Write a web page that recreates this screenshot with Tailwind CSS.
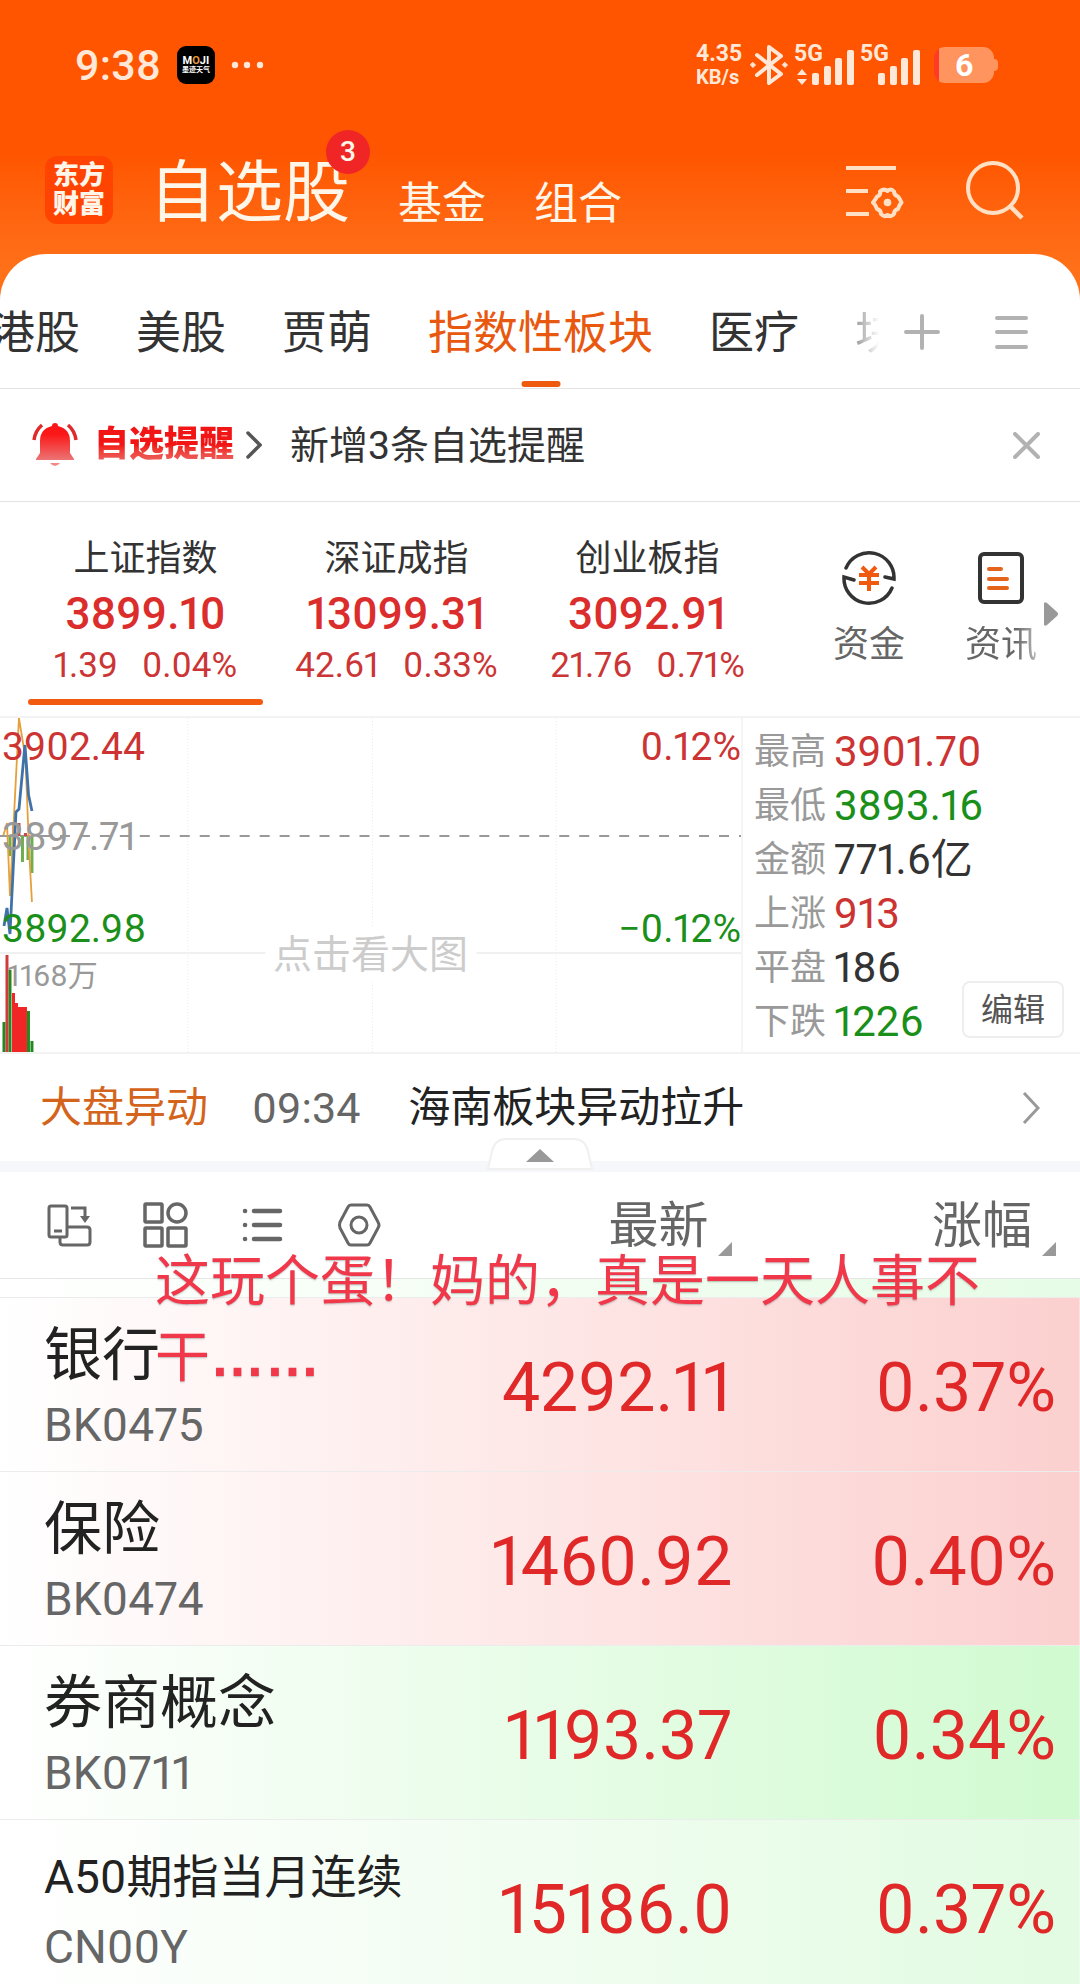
<!doctype html>
<html lang="zh-CN">
  <head>
    <title>自选股</title>
    <meta charset="UTF-8">
    <meta name="viewport" content="width=device-width, initial-scale=1.0">
    <script src="https://cdn.jsdelivr.net/npm/@tailwindcss/browser@4"></script>
  </head>
  <body class="bg-white font-['Roboto','Noto_Sans_CJK_SC',sans-serif] proportional-nums text-[#333] overflow-x-hidden">
    <header class="bg-linear-to-b from-[#ff5500] from-50% to-[#ff7119] to-90% text-[#fff6ea] pb-20">
      <!-- status bar -->
      <div class="flex items-center justify-between h-[130px] pl-[75px] pr-[82px] text-[#ffe8d8]">
        <div class="flex items-center">
          <span class="text-[43px] leading-[44px] font-medium">9:38</span>
          <div class="ml-4 flex flex-col items-center justify-center size-[38px] rounded-[9px] bg-black text-white">
            <span class="text-[11px] leading-[11px] font-bold">M<span class="text-[#e8993c]">O</span>JI</span>
            <span class="text-[7px] leading-[9px] font-bold">墨迹天气</span>
          </div>
          <svg class="ml-4 w-[33px] h-2" viewBox="0 0 33 8" fill="currentColor"><circle cx="4" cy="4" r="3.2"/><circle cx="16" cy="4" r="3.2"/><circle cx="29" cy="4" r="3.2"/></svg>
        </div>
        <div class="flex items-center">
          <div class="flex flex-col w-12 font-bold">
            <span class="text-[23px] leading-[24px]">4.35</span>
            <span class="text-[20px] leading-[22px]">KB/s</span>
          </div>
          <svg class="ml-[6px] w-[38px] h-[42px]" viewBox="0 0 38 42" fill="none" stroke="currentColor" stroke-width="4" stroke-linejoin="round" stroke-linecap="round"><path d="M7 11 31 30 19 39V3l12 9L7 31"/><path d="M3 18.500 5.500 21 3 23.500.5 21zM35 18.500 37.500 21 35 23.500 32.500 21z" fill="currentColor" stroke-width="1"/></svg>
          <svg class="ml-[6px] w-[62px] h-[42px] overflow-visible" viewBox="0 0 62 42" fill="currentColor"><text x="0" y="17" font-size="23" font-weight="700">5G</text><path d="M8 25l5 6H3zM8 41l5-6H3z"/><rect x="18" y="29" width="7" height="12" rx="2"/><rect x="30" y="22" width="7" height="19" rx="2"/><rect x="41" y="14" width="7" height="27" rx="2"/><rect x="53" y="6" width="7" height="35" rx="2"/></svg>
          <svg class="ml-1 w-[62px] h-[42px] overflow-visible" viewBox="0 0 62 42" fill="currentColor"><text x="0" y="17" font-size="23" font-weight="700">5G</text><rect x="18" y="29" width="7" height="12" rx="2"/><rect x="30" y="22" width="7" height="19" rx="2"/><rect x="41" y="14" width="7" height="27" rx="2"/><rect x="53" y="6" width="7" height="35" rx="2"/></svg>
          <div class="ml-3 flex items-center">
            <div class="w-[60px] h-9 rounded-[11px] bg-linear-to-r from-[#ff3b25] from-8% to-[#ff945e] to-8% text-center text-white text-[32px] leading-[37px] font-bold">6</div>
            <div class="w-1 h-3 rounded-r-full bg-[#ff945e]"></div>
          </div>
        </div>
      </div>
      <nav class="flex items-end h-[94px] pl-[45px] pr-[54px]">
        <a href="#" class="flex flex-col items-center justify-center size-[68px] rounded-xl bg-[#ff4300] text-[26px] leading-[29px] font-black">
          <span>东方</span><span>财富</span>
        </a>
        <a href="#" class="relative ml-9 text-[67px] leading-[62px]">自选股<span class="absolute -top-8 -right-5 size-11 rounded-full bg-[#f02525] text-center text-[28px] leading-[44px] font-medium">3</span></a>
        <a href="#" class="ml-12 text-[44px] leading-[40px]">基金</a>
        <a href="#" class="ml-12 text-[44px] leading-[40px]">组合</a>
        <button class="ml-auto mb-1" aria-label="设置">
          <svg class="w-[60px] h-[56px]" viewBox="0 0 60 56" fill="none" stroke="#ffe0c4" stroke-width="4"><path d="M0 4h50M0 27h22M0 50h23"/><path d="M34 27.500Q38 24 41.500 27 45 24 48 27.500 48 31 52 32.500 54 35 55.500 38.500 53 41 52 45 48 46 48 50 45 53.500 41.500 51 38 53.500 35 50 35 46 31 45 30 41 27 38.500 30 35 31 32.500 35 31 34 27.500z" stroke-linejoin="round"/><circle cx="41.500" cy="38.500" r="3.800" fill="#ffe0c4" stroke="none"/></svg>
        </button>
        <button class="ml-[60px] mb-1" aria-label="搜索">
          <svg class="size-[60px]" viewBox="0 0 60 60" fill="none" stroke="#ffe0c4" stroke-width="4"><circle cx="27" cy="28" r="25"/><path d="M43 45l13 13" stroke-width="4.500"/></svg>
        </button>
      </nav>
    </header>

    <main class="relative -mt-[50px] rounded-t-[46px] bg-white">
      <div class="flex h-[135px] border-b border-[#e3e3e3] text-[45px] leading-[44px]">
        <nav class="flex flex-1 items-center gap-14 -ml-[10px] overflow-hidden whitespace-nowrap pt-7 pb-[2px]">
          <a href="#">港股</a>
          <a href="#">美股</a>
          <a href="#">贾萌</a>
          <a href="#" class="relative text-[#e8590f]">指数性板块<span class="absolute left-1/2 -translate-x-1/2 top-[69px] w-[39px] h-[6px] rounded-full bg-[#ee5a0f]"></span></a>
          <a href="#">医疗</a>
          <a href="#" class="shrink-0 w-6 overflow-hidden bg-linear-to-r from-[#999] to-white bg-clip-text text-transparent">块</a>
        </nav>
        <button class="pt-[22px] pl-[16px]" aria-label="添加">
          <svg class="size-9" viewBox="0 0 36 36" stroke="#b2b2b2" stroke-width="4" stroke-linecap="round"><path d="M18 2v32M2 18h32"/></svg>
        </button>
        <button class="pt-[22px] pl-[53px] pr-[51px]" aria-label="分组">
          <svg class="size-9" viewBox="0 0 36 36" stroke="#b2b2b2" stroke-width="4" stroke-linecap="round"><path d="M4 4h29M4 18h29M4 33h29"/></svg>
        </button>
      </div>

      <!-- alert bar -->
      <div class="flex items-center h-[113px] border-b border-[#e3e3e3] pl-8 pr-10">
        <svg class="w-[46px] h-[44px]" viewBox="0 0 46 44" fill="none"><defs><linearGradient id="bell" x1="0" y1="0" x2="0" y2="1"><stop offset=".3" stop-color="#fb1717"/><stop offset="1" stop-color="#ec7474"/></linearGradient></defs><path d="M20 3a3 3 0 0 1 6 0q12 3 12 15v12l4 6v1H4v-1l4-6V18Q8 6 20 3z" fill="url(#bell)"/><path d="M18 40h10q-5 6-10 0z" fill="#f08a8a"/><path d="M10 2Q3 8 2 17M36 2q7 6 8 15" stroke="#e02a2a" stroke-width="3.500"/></svg>
        <a href="#" class="flex items-center ml-4">
          <span class="bg-linear-to-b from-[#f21515] from-50% to-[#e87070] bg-clip-text text-transparent text-[35px] leading-[44px] font-black">自选提醒</span>
          <svg class="ml-3 w-4 h-7" viewBox="0 0 16 28" fill="none" stroke="#555" stroke-width="3.500" stroke-linecap="round"><path d="M2 2l12 12L2 26"/></svg>
        </a>
        <p class="ml-7 pt-[2px] text-[39px] leading-[44px]">新增3条自选提醒</p>
        <button class="ml-auto" aria-label="关闭">
          <svg class="size-[27px]" viewBox="0 0 27 27" stroke="#b2b2b2" stroke-width="4" stroke-linecap="round"><path d="M2 2l23 23M25 2 2 25"/></svg>
        </button>
      </div>

      <!-- indices -->
      <div class="flex h-[214px] pl-5">
        <button class="relative w-[251px] pt-[34px] text-center flex flex-col">
          <span class="block w-full text-[36px] leading-[46px]">上证指数</span>
          <span class="block w-full text-[44px] leading-[64px] font-medium text-[#dc2d2d]">3899.10</span>
          <span class="flex w-full justify-center gap-6 text-[35px] leading-[40px] text-[#cc3535]"><span>1.39</span><span>0.04%</span></span>
          <span class="absolute inset-x-2 bottom-[11px] h-[6px] rounded-full bg-[#f25a10]"></span>
        </button>
        <button class="w-[251px] pt-[34px] text-center flex flex-col">
          <span class="block w-full text-[36px] leading-[46px]">深证成指</span>
          <span class="block w-full text-[44px] leading-[64px] font-medium text-[#dc2d2d]">13099.31</span>
          <span class="flex w-full justify-center gap-6 text-[35px] leading-[40px] text-[#cc3535]"><span>42.61</span><span>0.33%</span></span>
        </button>
        <button class="w-[251px] pt-[34px] text-center flex flex-col">
          <span class="block w-full text-[36px] leading-[46px]">创业板指</span>
          <span class="block w-full text-[44px] leading-[64px] font-medium text-[#dc2d2d]">3092.91</span>
          <span class="flex w-full justify-center gap-6 text-[35px] leading-[40px] text-[#cc3535]"><span>21.76</span><span>0.71%</span></span>
        </button>
        <div class="flex flex-1 items-start justify-end pt-12 text-[36px] leading-[46px] text-[#666]">
          <a href="#" class="flex flex-col items-center gap-4">
            <svg class="size-[56px]" viewBox="0 0 56 56" fill="none" stroke="#333" stroke-width="3.500"><path d="M5 18A25 25 0 0 1 53 29L44 27M51 38A25 25 0 0 1 3 27l10 3" stroke-linecap="round"/><path d="M21 17l7 7 7-7M18 25h20M18 33h20M28 24v17" stroke="#f05a10" stroke-width="4"/></svg>
            <span>资金</span>
          </a>
          <a href="#" class="ml-[60px] flex flex-col items-center gap-4">
            <svg class="size-[56px]" viewBox="0 0 56 56" fill="none" stroke="#333" stroke-width="4"><rect x="7" y="4" width="42" height="48" rx="4"/><path d="M16 19h12M16 29h18M16 38h18" stroke="#e5641c" stroke-linecap="round"/></svg>
            <span class="bg-linear-to-r from-[#666] from-70% to-[#bbb] bg-clip-text text-transparent">资讯</span>
          </a>
          <svg class="mt-[52px] ml-[7px] mr-[22px] w-[14px] h-6" viewBox="0 0 14 24" fill="#999"><path d="M0 2q0-3 3-1l10 9q2 2 0 4L3 23q-3 2-3-1z"/></svg>
        </div>
      </div>

      <!-- chart and figures -->
      <div class="flex h-[338px] border-y-2 border-[#f3f3f3]">
        <div class="relative w-[743px] border-r-2 border-[#f5f5f5] text-[39px] leading-[40px]">
          <svg class="absolute inset-0 size-full" viewBox="0 0 742 334" preserveAspectRatio="none" fill="none">
            <path d="M188 0v334M373 0v334M557 0v334" stroke="#ececec" stroke-dasharray="1 2"/>
            <path d="M0 235h742" stroke="#f0f0f0" stroke-width="2"/>
            <path d="M0 118h742" stroke="#999" stroke-width="2" stroke-dasharray="10 10"/>
            <path d="M10 118v20M22.500 118v26M28 118v24M32 118v37" stroke="#6fae4c" stroke-width="3"/>
            <path d="M14 107v11M19 105v13M25.500 115v3" stroke="#c8484c" stroke-width="3"/>
            <path d="M3.500 117 7 105l3 73 3-60L19 0l6.500 40L29 130l3 54" stroke="#e5a03c" stroke-width="1.800"/>
            <path d="M4 208 7 190l3 26 6-122 3-3 6-64 3.600 50L32 93" stroke="#3f72a8" stroke-width="2.800"/>
            <path d="M4 304v30M10 252v82M28.500 293v41M32 323v11" stroke="#1f8a1f" stroke-width="3"/>
            <path d="M7 237v97" stroke="#cf3a3a" stroke-width="3"/>
            <path d="M12 334V275h3v10h3v4h9v45z" fill="#f02525"/>
          </svg>
          <span class="absolute left-[2px] top-[9px] text-[#cc3333]">3902.44</span>
          <span class="absolute left-[2px] top-[99px] text-[#999]">3897.71</span>
          <span class="absolute left-[2px] top-[191px] text-[#1a8f1a]">3892.98</span>
          <span class="absolute left-[7px] top-[238px] text-[30px] text-[#999]">1168万</span>
          <span class="absolute right-0 top-[9px] text-[#cc3333]">0.12%</span>
          <span class="absolute right-0 top-[191px] text-[#1a8f1a]">−0.12%</span>
          <a href="#" class="absolute left-1/2 -translate-x-1/2 top-[210px] px-2 bg-white leading-[54px] whitespace-nowrap text-[#ccc]">点击看大图</a>
        </div>
        <div class="relative flex-1 pl-[11px] pt-[7px]">
          <dl class="grid grid-cols-[80px_1fr] text-[42px] leading-[54px]">
            <dt class="text-[36px] text-[#999]">最高</dt><dd class="text-[#cc3333]">3901.70</dd>
            <dt class="text-[36px] text-[#999]">最低</dt><dd class="text-[#1a8f1a]">3893.16</dd>
            <dt class="text-[36px] text-[#999]">金额</dt><dd>771.6亿</dd>
            <dt class="text-[36px] text-[#999]">上涨</dt><dd class="text-[#cc3333]">913</dd>
            <dt class="text-[36px] text-[#999]">平盘</dt><dd>186</dd>
            <dt class="text-[36px] text-[#999]">下跌</dt><dd class="text-[#1a8f1a]">1226</dd>
          </dl>
          <button class="absolute right-4 bottom-[14px] w-[102px] h-[57px] rounded-lg border-2 border-[#eee] bg-white text-[32px] leading-[52px] text-[#555]">编辑</button>
        </div>
      </div>

      <a href="#" class="relative flex items-center h-[107px] pl-10 pr-10 text-[42px] leading-[44px]">
        <span class="text-[#d4641c]">大盘异动</span>
        <time class="ml-11 text-[43px] text-[#666]">09:34</time>
        <span class="ml-12 text-[#222]">海南板块异动拉升</span>
        <svg class="ml-auto w-[18px] h-8" viewBox="0 0 18 32" fill="none" stroke="#999" stroke-width="3"><path d="M2 1l14 15L2 31"/></svg>
      </a>
      <div class="relative h-[11px] bg-[#f5f7fa]">
        <button class="absolute left-1/2 -translate-x-1/2 bottom-[2px]" aria-label="收起">
          <svg class="w-[106px] h-8" viewBox="0 0 106 32"><path d="M1 31 5 13Q8 1 19 1H87q11 0 14 12l4 18z" fill="#fff" stroke="#f0f0f0" stroke-width="2"/><path d="M53 11 67 24H39z" fill="#999"/></svg>
        </button>
      </div>

      <!-- watch list -->
      <div class="relative">
        <table class="w-full table-fixed">
          <thead>
            <tr class="h-[106px] text-[50px] leading-[60px] text-[#666]">
              <th class="w-[43%] pl-[46px]">
                <div class="flex items-center gap-[51px]">
                  <button aria-label="横屏"><svg class="size-[46px]" viewBox="0 0 46 46" fill="none" stroke="#666" stroke-width="3"><rect x="3" y="4" width="18" height="31" rx="2"/><path d="M8 29h8M25 6h14v12M21 25h20q3 0 3 3v12q0 3-3 3H17q-3 0-3-3v-5"/><path d="M34 14h10l-5 7z" fill="#666" stroke="none"/></svg></button>
                  <button aria-label="宫格"><svg class="size-[46px]" viewBox="0 0 46 46" fill="none" stroke="#666" stroke-width="3.500"><rect x="2" y="2" width="17" height="18" rx="1"/><circle cx="34" cy="11" r="9"/><rect x="2" y="26" width="17" height="18" rx="1"/><rect x="25" y="26" width="18" height="18" rx="1"/></svg></button>
                  <button aria-label="列表"><svg class="size-[46px]" viewBox="0 0 46 46" fill="none" stroke="#666" stroke-width="4.500" stroke-linecap="round"><path d="M5 9h.1M5 23h.1M5 37h.1M14 9h26M14 23h26M14 37h26"/></svg></button>
                  <button aria-label="设置"><svg class="size-[46px]" viewBox="0 0 46 46" fill="none" stroke="#666" stroke-width="3"><path d="M14 3h16q2 0 3 2l8 15q2 3 0 6l-8 15q-1 2-3 2H14q-2 0-3-2L3 26q-1-3 0-6L11 5q1-2 3-2z"/><circle cx="22" cy="23" r="8"/></svg></button>
                </div>
              </th>
              <th class="w-[25%] pt-[3px] pr-[2px] font-normal text-right">
                <button class="inline-flex items-end">最新<svg class="ml-[10px] w-[14px] h-[14px]" viewBox="0 0 14 14" fill="#999"><path d="M14 0v14H0z"/></svg></button>
              </th>
              <th class="w-[32%] pt-[3px] pr-6 font-normal text-right">
                <button class="inline-flex items-end">涨幅<svg class="ml-[10px] w-[14px] h-[14px]" viewBox="0 0 14 14" fill="#999"><path d="M14 0v14H0z"/></svg></button>
              </th>
            </tr>
          </thead>
          <tbody class="text-right text-[68px] leading-[72px] text-[#e02828]">
            <tr class="h-[19px] border-t border-[#e6e6e6] bg-linear-to-r from-white to-[#e6fce6]"><td colspan="3"></td></tr>
            <tr class="h-[174px] border-t border-[#ececec] bg-linear-to-r from-white to-[#fbd0cf]">
              <td class="pl-11 pt-2 text-left"><div class="text-[58px] leading-[74px] text-[#222]">银行</div><div class="text-[46px] leading-[66px] text-[#666]">BK0475</div></td>
              <td class="pt-2 pr-[2px]">4292.11</td>
              <td class="pt-2 pr-6">0.37%</td>
            </tr>
            <tr class="h-[174px] border-t border-[#ececec] bg-linear-to-r from-white to-[#fbd0cf]">
              <td class="pl-11 pt-2 text-left"><div class="text-[58px] leading-[74px] text-[#222]">保险</div><div class="text-[46px] leading-[66px] text-[#666]">BK0474</div></td>
              <td class="pt-2 pr-[2px]">1460.92</td>
              <td class="pt-2 pr-6">0.40%</td>
            </tr>
            <tr class="h-[174px] border-t border-[#ececec] bg-linear-to-r from-white to-[#d0fad0]">
              <td class="pl-11 pt-2 text-left"><div class="text-[58px] leading-[74px] text-[#222]">券商概念</div><div class="text-[46px] leading-[66px] text-[#666]">BK0711</div></td>
              <td class="pt-2 pr-[2px]">1193.37</td>
              <td class="pt-2 pr-6">0.34%</td>
            </tr>
            <tr class="h-[174px] border-t border-[#ececec] bg-linear-to-r from-white to-[#e2fbe2]">
              <td class="pl-11 pt-2 text-left"><div class="text-[46px] leading-[74px] text-[#222] whitespace-nowrap">A50期指当月连续</div><div class="text-[46px] leading-[66px] text-[#666]">CN00Y</div></td>
              <td class="pt-2 pr-[2px]">15186.0</td>
              <td class="pt-2 pr-6">0.37%</td>
            </tr>
          </tbody>
        </table>
        <p class="absolute left-[155px] top-[71px] w-[840px] text-[55px] leading-[76px] text-[#f0384a] text-shadow-sm pointer-events-none">这玩个蛋！妈的，真是一天人事不干<span class="font-['Liberation_Sans',sans-serif] font-bold">……</span></p>
      </div>
    </main>
  </body>
</html>
